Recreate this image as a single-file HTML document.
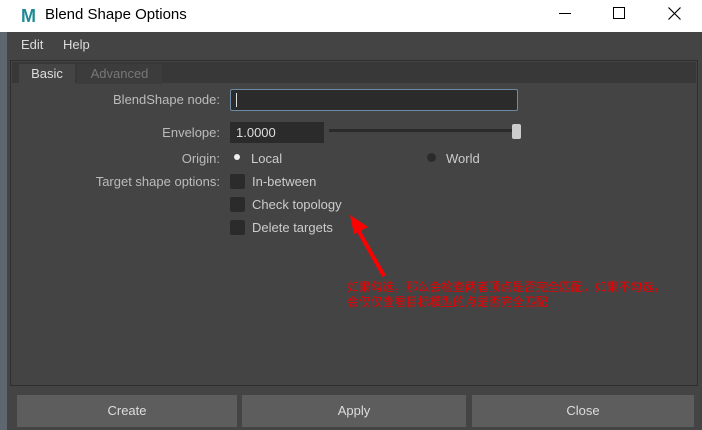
<!DOCTYPE html>
<html><head><meta charset="utf-8"><style>
*{margin:0;padding:0;box-sizing:border-box}
body{width:702px;height:430px;background:#444;font-family:"Liberation Sans",sans-serif;position:relative;overflow:hidden;color:#ccc;font-size:13px}
.a{position:absolute}
.lbl{position:absolute;text-align:right;color:#bbb;font-size:13px}
.cb{position:absolute;width:15px;height:15px;background:#2b2b2b;border-radius:2px}
.btn{position:absolute;top:395px;height:32px;background:#5d5d5d;color:#ddd;text-align:center;line-height:32px;font-size:13px}
</style></head><body>
<div class="a" style="left:0;top:0;width:702px;height:32px;background:#fff"></div>
<div class="a" style="left:21px;top:6px;font:bold 18px 'Liberation Sans';color:#1d8a96">M</div>
<div class="a" style="left:45px;top:6px;font-size:15px;color:#000">Blend Shape Options</div>
<div class="a" style="left:559px;top:13px;width:12px;height:1px;background:#000"></div>
<div class="a" style="left:613px;top:7px;width:12px;height:12px;border:1px solid #000"></div>
<svg class="a" style="left:668px;top:7px" width="13" height="13"><path d="M0.5 0.5L12.5 12.5M12.5 0.5L0.5 12.5" stroke="#000" stroke-width="1.2"/></svg>
<div class="a" style="left:0;top:32px;width:7px;height:398px;background:#5e6670"></div>
<div class="a" style="left:21px;top:37px;color:#ddd">Edit</div>
<div class="a" style="left:63px;top:37px;color:#ddd">Help</div>
<div class="a" style="left:10px;top:60px;width:688px;height:326px;border:1px solid #2e2e2e;background:#444"></div>
<div class="a" style="left:12px;top:62px;width:684px;height:21px;background:#383838"></div>
<div class="a" style="left:19px;top:64px;width:56px;height:20px;background:#444;color:#ddd;text-align:center;line-height:20px">Basic</div>
<div class="a" style="left:77px;top:64px;width:85px;height:20px;background:#3c3c3c;color:#777;text-align:center;line-height:20px">Advanced</div>
<div class="lbl" style="left:60px;width:160px;top:92px">BlendShape node:</div>
<div class="a" style="left:230px;top:89px;width:288px;height:22px;background:#2b2b2b;border:1px solid #6c8aa6;border-radius:2px"></div>
<div class="a" style="left:236px;top:93px;width:1px;height:14px;background:#ddd"></div>
<div class="lbl" style="left:60px;width:160px;top:125px">Envelope:</div>
<div class="a" style="left:230px;top:122px;width:94px;height:21px;background:#2b2b2b;color:#ddd;padding-left:6px;line-height:21px">1.0000</div>
<div class="a" style="left:329px;top:129px;width:186px;height:3px;background:#2b2b2b"></div>
<div class="a" style="left:512px;top:124px;width:9px;height:15px;background:#ccc;border-radius:2px"></div>
<div class="lbl" style="left:60px;width:160px;top:151px">Origin:</div>
<div class="a" style="left:234px;top:154px;width:6px;height:6px;border-radius:50%;background:#eee"></div>
<div class="a" style="left:251px;top:151px">Local</div>
<div class="a" style="left:427px;top:153px;width:9px;height:9px;border-radius:50%;background:#2b2b2b"></div>
<div class="a" style="left:446px;top:151px">World</div>
<div class="lbl" style="left:40px;width:180px;top:174px">Target shape options:</div>
<div class="cb" style="left:230px;top:174px"></div><div class="a" style="left:252px;top:174px">In-between</div>
<div class="cb" style="left:230px;top:197px"></div><div class="a" style="left:252px;top:197px">Check topology</div>
<div class="cb" style="left:230px;top:220px"></div><div class="a" style="left:252px;top:220px">Delete targets</div>
<svg class="a" style="left:340px;top:210px" width="60" height="70"><line x1="44" y1="66" x2="18" y2="20" stroke="#f00" stroke-width="4"/><polygon points="10,5 28,17 14,24" fill="#f00"/></svg>
<div class="a" style="left:347px;top:280px;color:#e00;font-size:11.8px;line-height:15px;white-space:nowrap;font-family:'Liberation Sans','Noto Sans CJK SC',sans-serif">如果勾选，那么会检查两者顶点是否完全匹配，如果不勾选，<br>会仅仅查看目标模型的点是否完全匹配</div>
<div class="btn" style="left:17px;width:220px">Create</div>
<div class="btn" style="left:242px;width:224px">Apply</div>
<div class="btn" style="left:472px;width:222px">Close</div>
</body></html>
